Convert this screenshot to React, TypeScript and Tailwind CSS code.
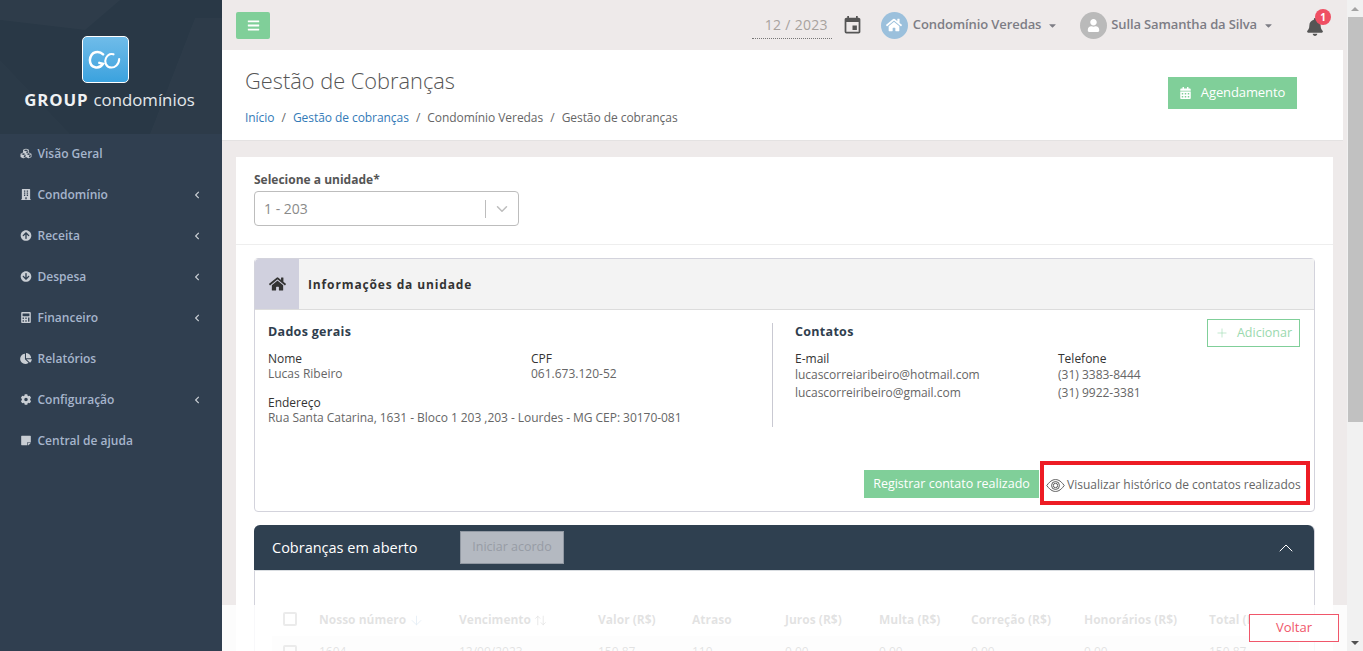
import {
  FaArrowCircleDown,
  FaArrowCircleUp,
  FaBars,
  FaBell,
  FaBuilding,
  FaCalculator,
  FaCalendarAlt,
  FaCaretDown,
  FaChartPie,
  FaChevronLeft,
  FaCog,
  FaCubes,
  FaHome,
  FaStickyNote,
  FaUser,
} from "react-icons/fa";
import { MdEvent } from "react-icons/md";
import { ArrowDown, ArrowUpDown, ChevronDown, ChevronUp, Plus } from "lucide-react";

const menu = [
  { label: "Visão Geral", icon: FaCubes },
  { label: "Condomínio", icon: FaBuilding, arrow: true },
  { label: "Receita", icon: FaArrowCircleUp, arrow: true },
  { label: "Despesa", icon: FaArrowCircleDown, arrow: true },
  { label: "Financeiro", icon: FaCalculator, arrow: true },
  { label: "Relatórios", icon: FaChartPie },
  { label: "Configuração", icon: FaCog, arrow: true },
  { label: "Central de ajuda", icon: FaStickyNote },
];

const columns = [
  { label: "Nosso número", width: "w-[140px]" },
  { label: "Vencimento", width: "w-[139px]" },
  { label: "Valor (R$)", width: "w-[94px]" },
  { label: "Atraso", width: "w-[93px]" },
  { label: "Juros (R$)", width: "w-[94px]" },
  { label: "Multa (R$)", width: "w-[92px]" },
  { label: "Correção (R$)", width: "w-[113px]" },
  { label: "Honorários (R$)", width: "w-[125px]" },
  { label: "Total (R$)", width: "w-[90px]" },
];

const row = ["1604", "12/09/2023", "150,87", "110", "0,00", "0,00", "0,00", "0,00", "150,87"];

function Logo() {
  return (
    <div className="relative flex h-[134px] flex-col items-center overflow-hidden bg-[#293846] pt-[36px]">
      {/* faint polygons behind the logo */}
      <svg viewBox="0 0 222 134" className="absolute inset-0 h-full w-full" fill="#ffffff">
        <polygon points="0,0 120,0 85,30 0,20" opacity="0.025" />
        <polygon points="195,18 222,18 222,134 150,134" opacity="0.02" />
        <polygon points="0,60 70,134 0,134" opacity="0.012" />
      </svg>
      <div className="relative mr-[12px] flex h-[47px] w-[47px] items-center justify-center rounded-[5px] border-[1.5px] border-white bg-gradient-to-b from-[#6fbce9] to-[#3aa2de]">
        <svg viewBox="0 0 36 20" className="h-[20px] w-[34px]" fill="none" stroke="white" strokeLinecap="round">
          <path d="M16 4 C12 0 3 0 2 10 C2 19 12 20 16 14 L12 13" strokeWidth="2.6" />
          <path d="M33 9 C33 15 28 18 25 18 C19 18 17 12 19 8 C21 4 24 3 27 4" strokeWidth="2.2" />
        </svg>
      </div>
      <div className="relative mr-[3px] mt-[4px] flex items-baseline gap-[5px] text-[16.8px] leading-[26px] text-[#e4e8ec]">
        <span className="font-bold tracking-[0.9px] text-[#f0f2f4]">GROUP</span>
        <span>condomínios</span>
      </div>
    </div>
  );
}

function Sidebar() {
  return (
    <aside className="w-[222px] shrink-0 bg-[#303f50]">
      <Logo />
      <nav className="-mt-px">
        {menu.map((item) => {
          const Icon = item.icon;
          return (
            <div key={item.label} className="flex h-[41px] items-center pl-[20px] pr-[21px] text-[12px] font-semibold text-[#a6b5cc]">
              <Icon className="h-[11px] w-[12px] text-[#c9ced4]" />
              <span className="ml-[5.5px] flex-1">{item.label}</span>
              {item.arrow && <FaChevronLeft className="h-[8px] w-[8px] text-[#c9ced4]" />}
            </div>
          );
        })}
      </nav>
    </aside>
  );
}

function TopBar() {
  return (
    <header className="flex h-[50px] items-center bg-[#eeeaea] pl-[14px] pr-[19px]">
      <button className="flex h-[27px] w-[34px] items-center justify-center rounded-[2px] bg-[#80cf99] text-white">
        <FaBars className="h-[13px] w-[13px]" />
      </button>
      <div className="ml-auto flex h-[28px] w-[80px] items-center border-b border-dotted border-[#777] pl-[13px] text-[14px] tracking-[0.3px] text-[#a8a29e]">
        <span className="whitespace-nowrap">12 / 2023</span>
      </div>
      <MdEvent className="ml-[10px] h-[21px] w-[21px] text-[#555]" />
      <div className="ml-[18px] flex h-[27px] w-[27px] items-center justify-center rounded-full bg-[#9bc0dc] text-white">
        <FaHome className="h-[16px] w-[16px]" />
      </div>
      <span className="ml-[5px] text-[13px] font-semibold tracking-[-0.1px] text-[#7d7d85]">Condomínio Veredas</span>
      <FaCaretDown className="ml-[6px] h-[11px] w-[11px] text-[#7d7d85]" />
      <div className="ml-[22px] flex h-[27px] w-[27px] items-center justify-center rounded-full bg-[#bababa] text-white">
        <FaUser className="h-[13px] w-[13px]" />
      </div>
      <span className="ml-[4px] text-[13px] font-semibold tracking-[-0.13px] text-[#7d7d85]">Sulla Samantha da Silva</span>
      <FaCaretDown className="ml-[6px] h-[11px] w-[11px] text-[#7d7d85]" />
      <div className="relative ml-[32px] h-[20px] w-[18px] text-[#555]">
        <FaBell className="mt-[3px] h-[18px] w-[18px]" />
        <span className="absolute left-[9px] top-[-6px] flex h-[16px] w-[16px] items-center justify-center rounded-full bg-[#ef4f63] text-[10px] font-bold text-white">1</span>
      </div>
    </header>
  );
}

function PageTitle() {
  return (
    <section className="flex h-[91px] border-b border-[#e4e2e2] bg-white pl-[23px] pr-[46px]">
      <div className="flex-1">
        <h1 className="mt-[16px] text-[21.8px] font-light leading-[29px] text-[#555]">Gestão de Cobranças</h1>
        <p className="mt-[14px] text-[12px] leading-[17px] tracking-[-0.06px] text-[#666]">
          <span className="text-[#337ab7]">Início</span>
          <span className="mx-[7.1px]">/</span>
          <span className="text-[#337ab7]">Gestão de cobranças</span>
          <span className="mx-[7.1px]">/</span>
          Condomínio Veredas
          <span className="mx-[7.1px]">/</span>
          Gestão de cobranças
        </p>
      </div>
      <button className="mt-[27px] flex h-[32px] w-[129px] items-center justify-center gap-[10px] bg-[#80cf99] text-[13px] tracking-[-0.1px] text-white">
        <FaCalendarAlt className="h-[12px] w-[11px]" />
        Agendamento
      </button>
    </section>
  );
}

function UnitCard() {
  return (
    <div className="rounded-[4px] border border-[#d3d3dc]">
      <div className="flex h-[51px] items-stretch border-b border-[#dcdcdc] bg-[#f3f3f3]">
        <div className="flex w-[44px] items-center justify-center rounded-tl-[4px] bg-[#d0d0de] text-[#333]">
          <FaHome className="h-[16px] w-[17px]" />
        </div>
        <h2 className="ml-[9px] mt-[1px] self-center text-[12px] font-bold tracking-[0.87px] text-[#333]">Informações da unidade</h2>
      </div>
      <div className="relative flex h-[201px] pl-[13px] pt-[13px] text-[12px] leading-[16px]">
        <div className="h-[104px] w-[505px] border-r border-[#c9c9d2]">
          <h3 className="text-[12.5px] font-bold leading-[17px] tracking-[0.3px] text-[#2f3e4e]">Dados gerais</h3>
          <div className="mt-[11px] flex">
            <div className="w-[263px]">
              <p className="leading-[15px] text-[#333]">Nome</p>
              <p className="text-[#666]">Lucas Ribeiro</p>
            </div>
            <div>
              <p className="leading-[15px] text-[#333]">CPF</p>
              <p className="text-[#666]">061.673.120-52</p>
            </div>
          </div>
          <p className="mt-[13px] leading-[15px] text-[#333]">Endereço</p>
          <p className="tracking-[-0.04px] text-[#666]">Rua Santa Catarina, 1631 - Bloco 1 203 ,203 - Lourdes - MG CEP: 30170-081</p>
        </div>
        <div className="ml-[22px] flex-1">
          <h3 className="text-[12.5px] font-bold leading-[17px] tracking-[0.3px] text-[#2f3e4e]">Contatos</h3>
          <div className="mt-[11px] flex">
            <div className="w-[263px]">
              <p className="text-[#333]">E-mail</p>
              <p className="tracking-[-0.03px] text-[#666]">lucascorreiaribeiro@hotmail.com</p>
              <p className="mt-[2px] tracking-[-0.03px] text-[#666]">lucascorreiribeiro@gmail.com</p>
            </div>
            <div>
              <p className="text-[#333]">Telefone</p>
              <p className="text-[#666]">(31) 3383-8444</p>
              <p className="mt-[2px] text-[#666]">(31) 9922-3381</p>
            </div>
          </div>
        </div>
        <button className="absolute right-[14px] top-[9px] flex h-[28px] w-[93px] items-center justify-center gap-[8px] border border-[#80cf99] text-[12.5px] text-[#9ad9ae]">
          <Plus className="h-[14px] w-[14px]" strokeWidth={1} />
          Adicionar
        </button>
        <div className="absolute bottom-[6px] right-[4px] flex items-center">
          <button className="mt-[1px] flex h-[28px] w-[175px] items-center justify-center bg-[#80cf99] text-[12.5px] text-white">Registrar contato realizado</button>
          <div className="ml-[1px] flex h-[44px] w-[270px] items-center border-[4px] border-[#ed1c24] pl-[2px] text-[12px] text-[#666]">
            <svg viewBox="0 0 24 18" className="mt-[4px] h-[15px] w-[19px]" fill="none" stroke="#555" strokeWidth="1.2">
              <path d="M1 9 C6 2 10 1.5 12 1.5 C14 1.5 18 2 23 9 C18 16 14 16.5 12 16.5 C10 16.5 6 16 1 9 Z" />
              <circle cx="12" cy="9" r="5" />
              <circle cx="12" cy="9" r="2.8" />
            </svg>
            <span className="ml-[2px] mt-[4px] whitespace-nowrap">Visualizar histórico de contatos realizados</span>
          </div>
        </div>
      </div>
    </div>
  );
}

function ChargesCard() {
  return (
    <div className="mt-[13px] rounded-t-[6px] border-x border-[#d3d3dc]">
      <div className="-ml-px flex h-[46px] items-center rounded-t-[6px] border-b border-[#d9dde1] bg-[#2f4050] pl-[18px] pr-[16px]">
        <h2 className="w-[188px] text-[14.5px] text-white">Cobranças em aberto</h2>
        <button className="flex h-[33px] w-[104px] items-center justify-center border border-[#9198a2] bg-[#b4b9c1] text-[12.5px] text-[#979ca5]">Iniciar acordo</button>
        <ChevronUp className="ml-auto h-[24px] w-[24px] text-white" strokeWidth={1} />
      </div>
      <table className="ml-[17px] mt-[33px] table-fixed text-left text-[12px] text-[#3f3f3f]">
        <thead>
          <tr className="h-[32px]">
            <th className="w-[47px] pl-[11px]">
              <span className="mb-[2px] block h-[14px] w-[14px] rounded-[2px] border-2 border-[#777]" />
            </th>
            {columns.map((col, i) => (
              <th key={col.label} className={`${col.width} whitespace-nowrap font-bold`}>
                {col.label}
                {i === 0 && <ArrowDown className="ml-[3px] inline h-[15px] w-[15px] text-[#337ab7]" strokeWidth={1.2} />}
                {i === 1 && <ArrowUpDown className="ml-[3px] inline h-[13px] w-[13px]" strokeWidth={1.4} />}
              </th>
            ))}
          </tr>
        </thead>
        <tbody>
          <tr className="h-[32px] bg-[#f2f2f2]">
            <td className="pl-[11px]">
              <span className="block h-[14px] w-[14px] rounded-[2px] border-2 border-[#777]" />
            </td>
            {row.map((value, i) => (
              <td key={i}>{value}</td>
            ))}
          </tr>
        </tbody>
      </table>
    </div>
  );
}

function Scrollbar() {
  return (
    <div className="flex w-[16px] shrink-0 flex-col items-center bg-[#f1f1f1]">
      <div className="flex h-[17px] items-center">
        <div className="h-0 w-0 border-x-[4px] border-b-[4px] border-x-transparent border-b-[#a3a3a3]" />
      </div>
      <div className="ml-px h-[405px] w-[15px] bg-[#c1c1c1]" />
      <div className="mt-auto flex h-[17px] items-center">
        <div className="h-0 w-0 border-x-[4px] border-t-[4px] border-x-transparent border-t-[#505050]" />
      </div>
    </div>
  );
}

export default function App() {
  return (
    <div className="flex h-[651px] w-[1363px] overflow-hidden bg-[#eeeaea] font-['Open_Sans',sans-serif]">
      <Sidebar />
      <main className="relative min-w-0 flex-1 overflow-hidden">
        <div className="mr-[4px]">
          <TopBar />
          <PageTitle />
        </div>
        <div className="ml-[14px] mr-[14px] mt-[16px] bg-white">
          <div className="h-[88px] border-b border-[#eeeeee] pl-[18px] pt-[14px]">
            <label className="block text-[12px] font-bold leading-[17px] text-[#555]">Selecione a unidade*</label>
            <div className="mt-[3px] flex h-[35px] w-[265px] items-center rounded-[4px] border border-[#bdbdbd] pl-[9px] text-[14px] text-[#8a8a8a]">
              <span className="flex-1">1 - 203</span>
              <span className="h-[18px] w-px bg-[#bdbdbd]" />
              <ChevronDown className="mx-[7px] h-[18px] w-[18px] text-[#bdbdbd]" strokeWidth={2} />
            </div>
          </div>
          <div className="px-[18px] pt-[13px]">
            <UnitCard />
            <ChargesCard />
          </div>
        </div>
        <div className="absolute bottom-0 left-0 right-0 h-[46px] bg-white/85">
          <button className="absolute right-[8px] top-[9px] h-[28px] w-[90px] border border-[#f0566a] bg-white text-[13px] text-[#f0566a]">Voltar</button>
        </div>
      </main>
      <Scrollbar />
    </div>
  );
}
